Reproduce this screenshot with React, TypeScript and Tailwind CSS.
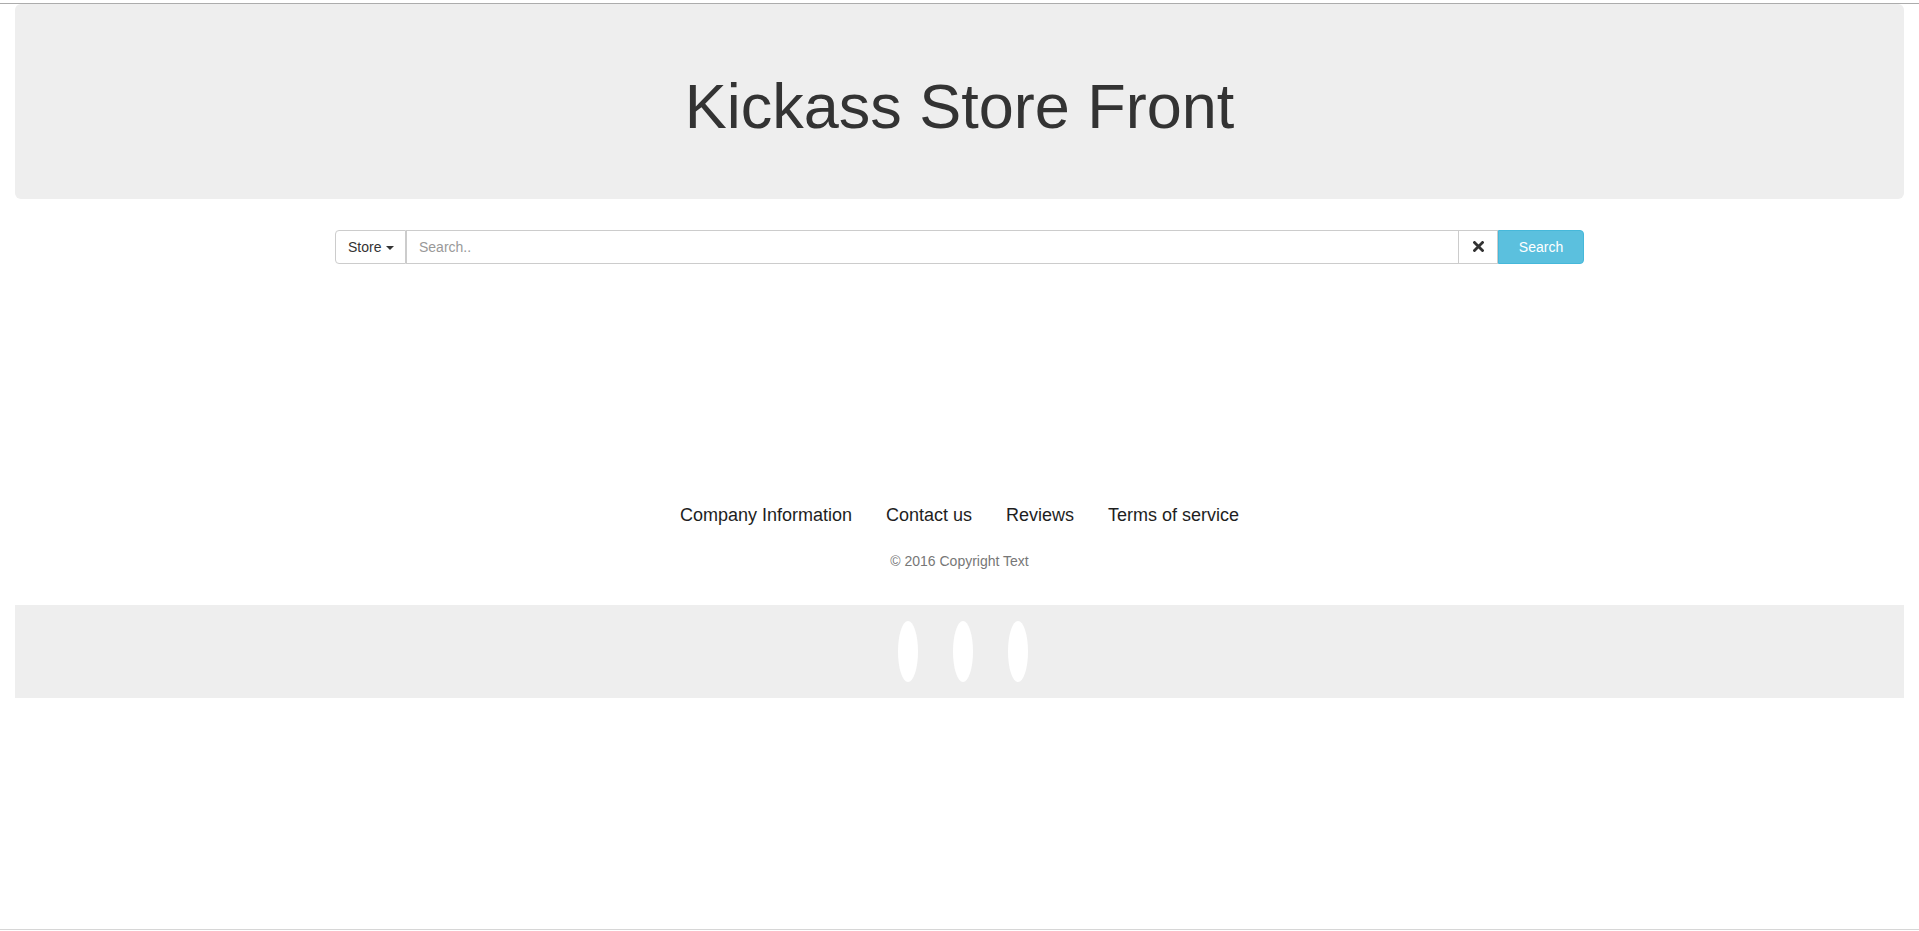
import { useState } from "react";

const links = ["Company Information", "Contact us", "Reviews", "Terms of service"];

function SearchBar() {
  const [query, setQuery] = useState("");

  return (
    <div className="mx-auto flex h-[34px] w-[1249px] text-[14px]">
      <button className="flex h-full w-[71px] items-center rounded-l-[4px] border border-[#ccc] bg-white pl-[12px] text-[#333]">
        Store
        <span className="ml-[5px] mt-[1px] h-0 w-0 border-x-[4px] border-t-[4px] border-x-transparent border-t-[#333]" />
      </button>
      <input
        value={query}
        onChange={(e) => setQuery(e.target.value)}
        placeholder="Search.."
        className="h-full flex-1 border-y border-l border-[#ccc] px-[12px] text-[#555] outline-none placeholder:text-[#999]"
      />
      <button
        onClick={() => setQuery("")}
        className="flex h-full w-[40px] items-center justify-center border border-[#ccc] bg-white pb-[2px]"
      >
        <svg width="11" height="11" viewBox="0 0 11 11">
          <path d="M1.5 1.5 L9.5 9.5 M9.5 1.5 L1.5 9.5" stroke="#333" strokeWidth="2.8" strokeLinecap="square" />
        </svg>
      </button>
      <button className="h-full w-[86px] rounded-r-[4px] border border-[#46b8da] bg-[#5bc0de] text-white">
        Search
      </button>
    </div>
  );
}

export default function App() {
  return (
    <div className="flex h-[931px] flex-col bg-white font-['Liberation_Sans',Arial,sans-serif] text-[#333]">
      <div className="h-[3px]" />
      <div className="h-px bg-[#acacac]" />

      {/* jumbotron */}
      <header className="mx-[15px] rounded-[6px] bg-[#eee] pb-[58px] pt-[68px] text-center">
        <h1 className="text-[63px] leading-[69px]">Kickass Store Front</h1>
      </header>

      <div className="mt-[31px]">
        <SearchBar />
      </div>

      {/* footer */}
      <ul className="mt-[241px] flex justify-center text-[18px] leading-[20px] text-[#1e1e1e]">
        {links.map((l) => (
          <li key={l} className="px-[17px]">
            <a href="#">{l}</a>
          </li>
        ))}
      </ul>
      <p className="mt-[26px] text-center text-[14px] leading-[20px] text-[#777]">© 2016 Copyright Text</p>

      <div className="mx-[15px] mt-[34px] flex h-[93px] items-center justify-center bg-[#eee]">
        <div className="ml-[7px] flex gap-[35px]">
          <span className="h-[61px] w-[20px] rounded-[50%] bg-white" />
          <span className="h-[61px] w-[20px] rounded-[50%] bg-white" />
          <span className="h-[61px] w-[20px] rounded-[50%] bg-white" />
        </div>
      </div>

      <div className="flex-1" />
      <div className="h-px bg-[#d6d6d6]" />
      <div className="h-px" />
    </div>
  );
}
